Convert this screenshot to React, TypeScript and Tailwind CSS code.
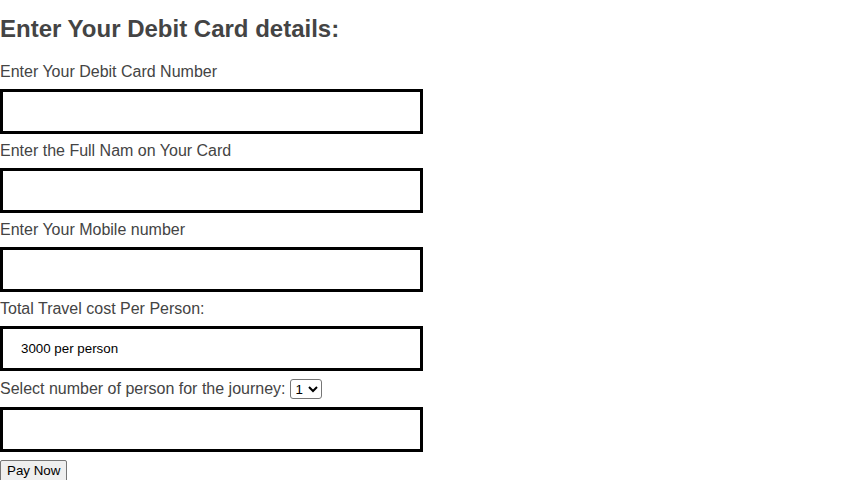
import React, { useState } from 'react'

const fieldClass =
  'block w-[423px] h-[45px] my-2 px-[18px] border-[3px] border-black bg-white text-[13.33px] text-black outline-none'

export default function App() {
  const [persons, setPersons] = useState('1')

  return (
    <div className="min-h-screen bg-white font-['Liberation_Sans',Arial,sans-serif] text-[#444]">
      <h2 className="pt-[15px] mb-[20px] text-[24px] leading-[28px] font-bold text-[#444]">
        Enter Your Debit Card details:
      </h2>

      <form onSubmit={(e) => e.preventDefault()}>
        <label className="block text-[16px] leading-[18px]">Enter Your Debit Card Number</label>
        <input type="text" className={fieldClass} />

        <label className="block text-[16px] leading-[18px]">Enter the Full Nam on Your Card</label>
        <input type="text" className={fieldClass} />

        <label className="block text-[16px] leading-[18px]">Enter Your Mobile number</label>
        <input type="text" className={fieldClass} />

        <label className="block text-[16px] leading-[18px]">Total Travel cost Per Person:</label>
        <input type="text" readOnly value="3000 per person" className={fieldClass} />

        <div className="flex items-center text-[16px] leading-[18px]">
          <span>Select number of person for the journey:</span>
          <select
            value={persons}
            onChange={(e) => setPersons(e.target.value)}
            className="ml-1 h-5 border border-[#767676] rounded-[3px] bg-white text-[13.33px] text-black px-px"
          >
            <option value="1">1</option>
            <option value="2">2</option>
            <option value="3">3</option>
            <option value="4">4</option>
          </select>
        </div>
        <input type="text" className={fieldClass} />

        <button
          type="submit"
          className="block h-[22px] px-[6px] border border-[#767676] rounded-[2px] bg-[#efefef] text-[13.33px] text-black"
        >
          Pay Now
        </button>
      </form>
    </div>
  )
}
